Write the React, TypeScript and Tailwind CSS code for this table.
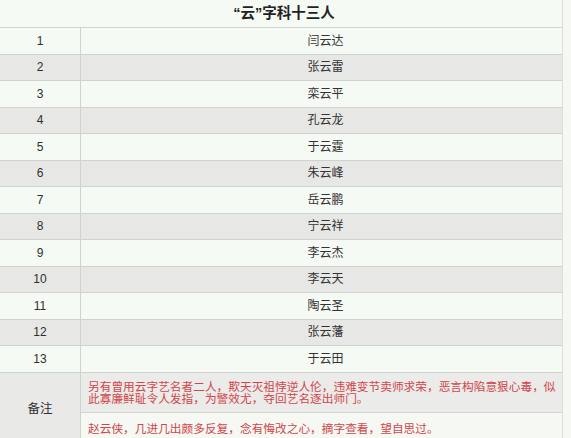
const NAMES = [
  '闫云达', '张云雷', '栾云平', '孔云龙', '于云霆', '朱云峰', '岳云鹏',
  '宁云祥', '李云杰', '李云天', '陶云圣', '张云藩', '于云田',
];

const FONT = "font-['Liberation_Sans','Noto_Sans_CJK_SC',sans-serif]";

export default function App() {
  return (
    <div className={`w-[571px] h-[438px] overflow-hidden bg-[#f5f8f3] text-[#2e2e2e] ${FONT}`}>
      <div className="w-[563px] border-r border-[#dcded9]">
        {/* title */}
        <div className="h-[28px] flex items-center justify-center border-b border-[#d3d5d0] bg-[#f6faf5]">
          <span className="text-[14.5px] font-bold pl-[6px] text-[#222]">“云”字科十三人</span>
        </div>

        {/* rows */}
        {NAMES.map((name, i) => (
          <div
            key={name}
            className={`h-[26.5px] flex border-b border-[#d0d2ce] ${i % 2 ? 'bg-[#e7e8e5]' : 'bg-[#f6faf5]'}`}
          >
            <div className="w-[81px] flex items-center justify-center border-r border-[#d0d2ce] text-[12px]">
              {i + 1}
            </div>
            <div className="flex-1 flex items-center justify-center text-[12px] pl-[8px] text-[#333]">
              {name}
            </div>
          </div>
        ))}

        {/* remarks */}
        <div className="flex bg-[#e9eae7]">
          <div className="w-[81px] flex items-center justify-center border-r border-[#d0d2ce] text-[12.5px] pt-[4px]">
            备注
          </div>
          <div className="flex-1 text-[11.7px] leading-[12px] text-[#d0464a]">
            <div className="h-[40px] pl-[7px] pt-[8px] bg-[#ebebe9] border-b border-[#d3d5d0]">
              另有曾用云字艺名者二人，欺天灭祖悖逆人伦，违难变节卖师求荣，恶言构陷意狠心毒，似此寡廉鲜耻令人发指，为警效尤，夺回艺名逐出师门。
            </div>
            <div className="h-[30px] pl-[7px] pt-[10px] bg-[#f6f8f4]">
              赵云侠，几进几出颇多反复，念有悔改之心，摘字查看，望自思过。
            </div>
          </div>
        </div>
      </div>
    </div>
  );
}
